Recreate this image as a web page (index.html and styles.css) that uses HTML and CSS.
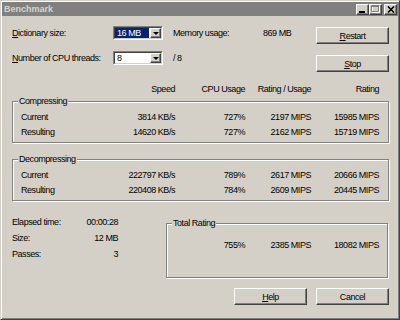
FILE: index.html
```html
<!DOCTYPE html>
<html>
<head>
<meta charset="utf-8">
<link rel="stylesheet" href="styles.css">
</head>
<body>
<div class="window">
  <div class="titlebar">
    <span class="title">Benchmark</span>
    <div class="tb-buttons">
      <span class="tb-btn"><svg width="7" height="7" viewBox="0 0 7 7"><rect x="0" y="5" width="6" height="2" fill="#000"/></svg></span>
      <span class="tb-btn"><svg width="9" height="8" viewBox="0 0 9 8"><path d="M1.5 1.5h7v6h-7z" fill="none" stroke="#fff"/><path d="M0.5 0.5h7v6h-7z" fill="none" stroke="#808080"/><rect x="0" y="0" width="8" height="2" fill="#808080"/></svg></span>
      <span class="tb-btn close"><svg width="8" height="7" viewBox="0 0 8 7"><path d="M1 0.5l6 6M7 0.5l-6 6" stroke="#000" stroke-width="1.6"/></svg></span>
    </div>
  </div>
  <div class="content">
    <div class="top">
      <div class="settings">
        <div class="srow">
          <label class="slabel"><u>D</u>ictionary size:</label>
          <div class="combo"><div class="combo-inner"><span class="combo-text selected">16 MB</span><span class="combo-btn"><span class="arrow"></span></span></div></div>
          <span class="mlabel">Memory usage:</span>
          <span>869 MB</span>
        </div>
        <div class="srow">
          <label class="slabel"><u>N</u>umber of CPU threads:</label>
          <div class="combo"><div class="combo-inner"><span class="combo-text">8</span><span class="combo-btn"><span class="arrow"></span></span></div></div>
          <span class="mlabel">/ 8</span>
        </div>
      </div>
      <div class="side-buttons">
        <button class="btn"><u>R</u>estart</button>
        <button class="btn"><u>S</u>top</button>
      </div>
    </div>

    <div class="grid header">
      <span></span><span>Speed</span><span>CPU Usage</span><span>Rating / Usage</span><span>Rating</span>
    </div>

    <fieldset class="group">
      <legend>Compressing</legend>
      <div class="grid rows">
        <span>Current</span><span>3814 KB/s</span><span>727%</span><span>2197 MIPS</span><span>15985 MIPS</span>
        <span>Resulting</span><span>14620 KB/s</span><span>727%</span><span>2162 MIPS</span><span>15719 MIPS</span>
      </div>
    </fieldset>

    <fieldset class="group second">
      <legend>Decompressing</legend>
      <div class="grid rows">
        <span>Current</span><span>222797 KB/s</span><span>789%</span><span>2617 MIPS</span><span>20666 MIPS</span>
        <span>Resulting</span><span>220408 KB/s</span><span>784%</span><span>2609 MIPS</span><span>20445 MIPS</span>
      </div>
    </fieldset>

    <div class="bottom">
      <div class="stats">
        <div class="stat"><span>Elapsed time:</span><span>00:00:28</span></div>
        <div class="stat"><span>Size:</span><span>12 MB</span></div>
        <div class="stat"><span>Passes:</span><span>3</span></div>
      </div>
      <fieldset class="group total">
        <legend>Total Rating</legend>
        <div class="total-grid">
          <span>755%</span><span>2385 MIPS</span><span>18082 MIPS</span>
        </div>
      </fieldset>
    </div>

    <div class="actions">
      <button class="btn"><u>H</u>elp</button>
      <button class="btn">Cancel</button>
    </div>
  </div>
</div>
</body>
</html>
```

FILE: styles.css
```css
html, body {
  margin: 0;
  padding: 0;
  background: #d4d0c8;
}
body {
  font-family: "Liberation Sans", Arial, sans-serif;
  font-size: 9px;
  letter-spacing: -0.45px;
  color: #000;
}
.window {
  width: 400px;
  height: 320px;
  box-sizing: border-box;
  border: 1px solid;
  border-color: #d4d0c8 #404040 #404040 #d4d0c8;
  box-shadow: inset 1px 1px #fff, inset -1px -1px #808080;
  padding: 1px;
  display: flex;
  flex-direction: column;
  background: #d4d0c8;
}
.titlebar {
  height: 14px;
  flex: none;
  background: #808080;
  display: flex;
  align-items: center;
  justify-content: space-between;
  padding: 0 1px 0 1px;
}
.title {
  font-family: "Liberation Sans", Arial, sans-serif;
  font-weight: bold;
  font-size: 9px;
  letter-spacing: 0;
  color: #d8d4cc;
  padding-left: 1px;
}
.tb-buttons {
  display: flex;
}
.tb-btn {
  width: 13px;
  height: 11px;
  box-sizing: border-box;
  background: #d4d0c8;
  border: 1px solid;
  border-color: #fff #404040 #404040 #fff;
  box-shadow: inset -1px -1px #808080;
  display: flex;
  align-items: center;
  justify-content: center;
}
.tb-btn svg { display: block; }
.tb-btn.close { margin-left: 2px; }

.content {
  padding: 10px 9px 0 10px;
}
.top {
  display: flex;
  justify-content: space-between;
  align-items: flex-start;
}
.settings {
  display: flex;
  flex-direction: column;
  gap: 11px;
}
.srow {
  display: flex;
  align-items: center;
  height: 14px;
  white-space: nowrap;
}
.slabel { width: 101px; flex: none; }
.mlabel { margin-left: 10px; width: 90px; flex: none; }
.combo {
  width: 50px;
  height: 14px;
  flex: none;
  box-sizing: border-box;
  border: 1px solid;
  border-color: #808080 #fff #fff #808080;
}
.combo-inner {
  height: 100%;
  box-sizing: border-box;
  border: 1px solid;
  border-color: #404040 #d4d0c8 #d4d0c8 #404040;
  background: #fff;
  display: flex;
}
.combo-text {
  flex: 1;
  margin-right: 1px;
  padding-left: 2px;
  line-height: 10px;
}
.combo-text.selected {
  background: #0a246a;
  color: #fff;
}
.combo-btn {
  width: 11px;
  height: 10px;
  box-sizing: border-box;
  background: #d4d0c8;
  border: 1px solid;
  border-color: #fff #404040 #404040 #fff;
  box-shadow: inset -1px -1px #808080;
  display: flex;
  align-items: center;
  justify-content: center;
}
.arrow {
  width: 0;
  height: 0;
  border-left: 3px solid transparent;
  border-right: 3px solid transparent;
  border-top: 3px solid #000;
}
.side-buttons {
  display: flex;
  flex-direction: column;
  gap: 11px;
  margin-top: 1px;
}
.btn {
  width: 73px;
  height: 17px;
  padding: 0;
  font: inherit;
  letter-spacing: inherit;
  color: #000;
  background: #d4d0c8;
  border: 1px solid;
  border-color: #fff #404040 #404040 #fff;
  box-shadow: inset -1px -1px #808080;
  border-radius: 0;
}

.grid {
  display: grid;
  grid-template-columns: 80px 74px 70px 66px 68px;
  margin-left: 8px;
}
.grid span, .total-grid span {
  text-align: right;
  white-space: nowrap;
}
.grid span:nth-child(5n+1) { text-align: left; }
.header {
  margin-left: 9px;
  margin-top: 11px;
  line-height: 12px;
}
.group {
  margin: 0;
  padding: 3px 0 2px;
  border: 1px solid #808080;
  box-shadow: inset 1px 1px #fff, 1px 1px #fff;
  min-inline-size: 0;
}
.group legend {
  margin-left: 5px;
  padding: 0 1px;
  line-height: 12px;
  background: #d4d0c8;
}
.group.second { margin-top: 10px; }
.rows { line-height: 15px; }

.bottom {
  display: flex;
  margin-top: 13px;
}
.stats {
  width: 106px;
  line-height: 16px;
}
.stat {
  display: flex;
  justify-content: space-between;
}
.group.total {
  width: 222px;
  box-sizing: border-box;
  margin: 3px 1px 0 auto;
  padding: 10px 0 26px;
}
.total-grid {
  display: grid;
  grid-template-columns: 78px 66px 68px;
  line-height: 12px;
}
.actions {
  display: flex;
  justify-content: flex-end;
  gap: 9px;
  margin-top: 10px;
}
```
